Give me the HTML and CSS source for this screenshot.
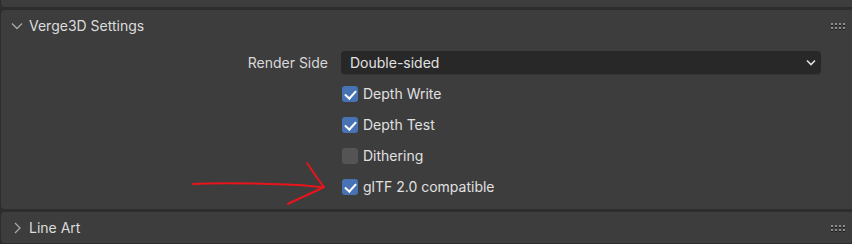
FILE: index.html
```html
<!DOCTYPE html>
<html lang="en">
<head>
    <meta charset="UTF-8">
    <title>Verge3D Settings</title>
    <link rel="stylesheet" href="styles.css">
</head>
<body>
    <div class="panel panel-top"></div>

    <div class="panel">
        <div class="panel-header">
            <svg class="chevron" width="12" height="8" viewBox="0 0 12 8">
                <path d="M1 1.5 L6 6.5 L11 1.5" fill="none" stroke="#a8a8a8" stroke-width="1.3"/>
            </svg>
            <span class="panel-title">Verge3D Settings</span>
            <svg class="grip" width="16" height="8" viewBox="0 0 16 8">
                <g fill="#1c1c1c">
                    <rect x="0" y="1" width="2" height="2"/><rect x="4" y="1" width="2" height="2"/>
                    <rect x="8" y="1" width="2" height="2"/><rect x="12" y="1" width="2" height="2"/>
                    <rect x="0" y="5" width="2" height="2"/><rect x="4" y="5" width="2" height="2"/>
                    <rect x="8" y="5" width="2" height="2"/><rect x="12" y="5" width="2" height="2"/>
                </g>
                <g fill="#8c8c8c">
                    <rect x="0" y="0" width="2" height="2"/><rect x="4" y="0" width="2" height="2"/>
                    <rect x="8" y="0" width="2" height="2"/><rect x="12" y="0" width="2" height="2"/>
                    <rect x="0" y="4" width="2" height="2"/><rect x="4" y="4" width="2" height="2"/>
                    <rect x="8" y="4" width="2" height="2"/><rect x="12" y="4" width="2" height="2"/>
                </g>
            </svg>
        </div>

        <div class="panel-body">
            <div class="row">
                <label class="row-label">Render Side</label>
                <div class="dropdown">
                    <span>Double-sided</span>
                    <svg width="10" height="7" viewBox="0 0 10 7">
                        <path d="M1 1.5 L5 5.5 L9 1.5" fill="none" stroke="#e0e0e0" stroke-width="1.6"/>
                    </svg>
                </div>
            </div>
            <div class="row">
                <span></span>
                <div class="check"><span class="box checked"></span>Depth Write</div>
            </div>
            <div class="row">
                <span></span>
                <div class="check"><span class="box checked"></span>Depth Test</div>
            </div>
            <div class="row">
                <span></span>
                <div class="check"><span class="box"></span>Dithering</div>
            </div>
            <div class="row">
                <span></span>
                <div class="check"><span class="box checked"></span>glTF 2.0 compatible</div>
            </div>
        </div>
    </div>

    <div class="panel panel-closed">
        <div class="panel-header">
            <svg class="chevron" width="12" height="12" viewBox="0 0 12 12">
                <path d="M4 1 L9 6 L4 11" fill="none" stroke="#a8a8a8" stroke-width="1.3"/>
            </svg>
            <span class="panel-title">Line Art</span>
            <svg class="grip" width="16" height="8" viewBox="0 0 16 8">
                <g fill="#1c1c1c">
                    <rect x="0" y="1" width="2" height="2"/><rect x="4" y="1" width="2" height="2"/>
                    <rect x="8" y="1" width="2" height="2"/><rect x="12" y="1" width="2" height="2"/>
                    <rect x="0" y="5" width="2" height="2"/><rect x="4" y="5" width="2" height="2"/>
                    <rect x="8" y="5" width="2" height="2"/><rect x="12" y="5" width="2" height="2"/>
                </g>
                <g fill="#8c8c8c">
                    <rect x="0" y="0" width="2" height="2"/><rect x="4" y="0" width="2" height="2"/>
                    <rect x="8" y="0" width="2" height="2"/><rect x="12" y="0" width="2" height="2"/>
                    <rect x="0" y="4" width="2" height="2"/><rect x="4" y="4" width="2" height="2"/>
                    <rect x="8" y="4" width="2" height="2"/><rect x="12" y="4" width="2" height="2"/>
                </g>
            </svg>
        </div>
    </div>

    <!-- hand drawn annotation -->
    <svg class="annotation" width="852" height="244" viewBox="0 0 852 244">
        <path d="M193 184 C230 182 270 184 300 185 C310 186 318 187 323 187" fill="none" stroke="#e8141c" stroke-width="2" stroke-linecap="round"/>
        <path d="M307 163 C312 170 318 180 324 187 C312 193 298 199 288 204" fill="none" stroke="#e8141c" stroke-width="2" stroke-linecap="round" stroke-linejoin="round"/>
    </svg>
</body>
</html>
```

FILE: styles.css
```css
* {
    margin: 0;
    padding: 0;
    box-sizing: border-box;
}

body {
    font-family: 'Inter', 'Noto Sans', sans-serif;
    font-size: 14px;
    color: #e2e2e2;
    background: #2d2d2d;
    width: 852px;
    height: 244px;
    overflow: hidden;
    position: relative;
    display: flex;
    flex-direction: column;
    gap: 3px;
}

.panel {
    background: #3d3d3d;
    border-radius: 4px;
    margin-left: 1px;
    margin-right: -6px;
    height: 199px;
}

.panel-top {
    height: 7px;
    border-radius: 0 0 4px 4px;
}

.panel-closed {
    height: 31px;
}

.panel-header {
    height: 31px;
    display: flex;
    align-items: center;
    padding-left: 10px;
    padding-right: 11px;
}

.chevron {
    margin-right: 6px;
}

.panel-title {
    color: #dcdcdc;
    flex: 1;
}

.grip {
    margin-top: 2px;
}

.panel-body {
    padding-top: 6px;
    padding-right: 37px;
}

.row {
    display: grid;
    grid-template-columns: 327px 1fr;
    column-gap: 13px;
    height: 31px;
    align-items: center;
}

.row-label {
    text-align: right;
    color: #d8d8d8;
}

.dropdown {
    height: 23px;
    background: #282828;
    border-radius: 4px;
    display: flex;
    align-items: center;
    justify-content: space-between;
    padding: 0 5px 0 9px;
    box-shadow: 0 1px 0 #353535;
}

.check {
    display: flex;
    align-items: center;
    gap: 5px;
    padding-left: 1px;
    color: #e0e0e0;
}

.box {
    width: 16px;
    height: 16px;
    border-radius: 3px;
    background: #545454;
    position: relative;
}

.box.checked {
    background: #4772b3;
}

.box.checked::after {
    content: '';
    position: absolute;
    left: 3px;
    top: 3px;
    width: 9px;
    height: 5px;
    border-left: 2px solid #fff;
    border-bottom: 2px solid #fff;
    transform: translate(0, 1px) rotate(-48deg);
}

.annotation {
    position: absolute;
    left: 0;
    top: 0;
    pointer-events: none;
}
```
